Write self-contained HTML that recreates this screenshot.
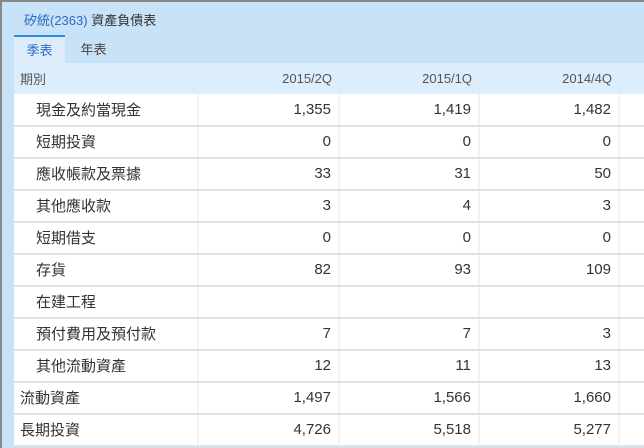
<!DOCTYPE html>
<html><head><meta charset="utf-8"><style>
*{margin:0;padding:0;box-sizing:border-box}
body{width:644px;height:448px;overflow:hidden;background:#c8e2f8;font-family:"Liberation Sans","Noto Sans CJK TC",sans-serif;position:relative;border-top:2px solid #888;border-left:2px solid #888}
.title{position:absolute;left:22px;top:8px;font-size:13px;color:#333}
.title span{color:#2a6cc4}
.tab{position:absolute;top:33px;height:30px;width:51px;font-size:13px;text-align:center;line-height:30px;color:#444}
.t1{left:12px;background:#dcecfb;border-top:2px solid #2b8ae6;color:#2a6cc4;line-height:27px}
.t2{left:66px}
table{position:absolute;left:12px;top:61px;border-collapse:collapse;width:640px;table-layout:fixed}
td{height:32px;border-bottom:2px solid #e2e2e2;border-right:2px solid #f3f3f3;font-size:15px;color:#333;text-align:right;padding-right:7px;background:#fff;padding-bottom:1px}
tr.h td{height:31px;background:#dcedfc;font-size:13px;color:#555;border:none}
td:first-child{text-align:left;padding-left:22px}
td.n{padding-left:6px}
</style></head><body>
<div class="title"><span>矽統(2363)</span> 資產負債表</div>
<div class="tab t1">季表</div><div class="tab t2">年表</div>
<table>
<colgroup><col style="width:184px"><col style="width:141px"><col style="width:140px"><col style="width:140px"><col style="width:35px"></colgroup>
<tr class="h"><td class="n">期別</td><td>2015/2Q</td><td>2015/1Q</td><td>2014/4Q</td><td></td></tr>
<tr><td>現金及約當現金</td><td>1,355</td><td>1,419</td><td>1,482</td><td></td></tr>
<tr><td>短期投資</td><td>0</td><td>0</td><td>0</td><td></td></tr>
<tr><td>應收帳款及票據</td><td>33</td><td>31</td><td>50</td><td></td></tr>
<tr><td>其他應收款</td><td>3</td><td>4</td><td>3</td><td></td></tr>
<tr><td>短期借支</td><td>0</td><td>0</td><td>0</td><td></td></tr>
<tr><td>存貨</td><td>82</td><td>93</td><td>109</td><td></td></tr>
<tr><td>在建工程</td><td></td><td></td><td></td><td></td></tr>
<tr><td>預付費用及預付款</td><td>7</td><td>7</td><td>3</td><td></td></tr>
<tr><td>其他流動資產</td><td>12</td><td>11</td><td>13</td><td></td></tr>
<tr><td class="n">流動資產</td><td>1,497</td><td>1,566</td><td>1,660</td><td></td></tr>
<tr><td class="n">長期投資</td><td>4,726</td><td>5,518</td><td>5,277</td><td></td></tr>
</table>
</body></html>
